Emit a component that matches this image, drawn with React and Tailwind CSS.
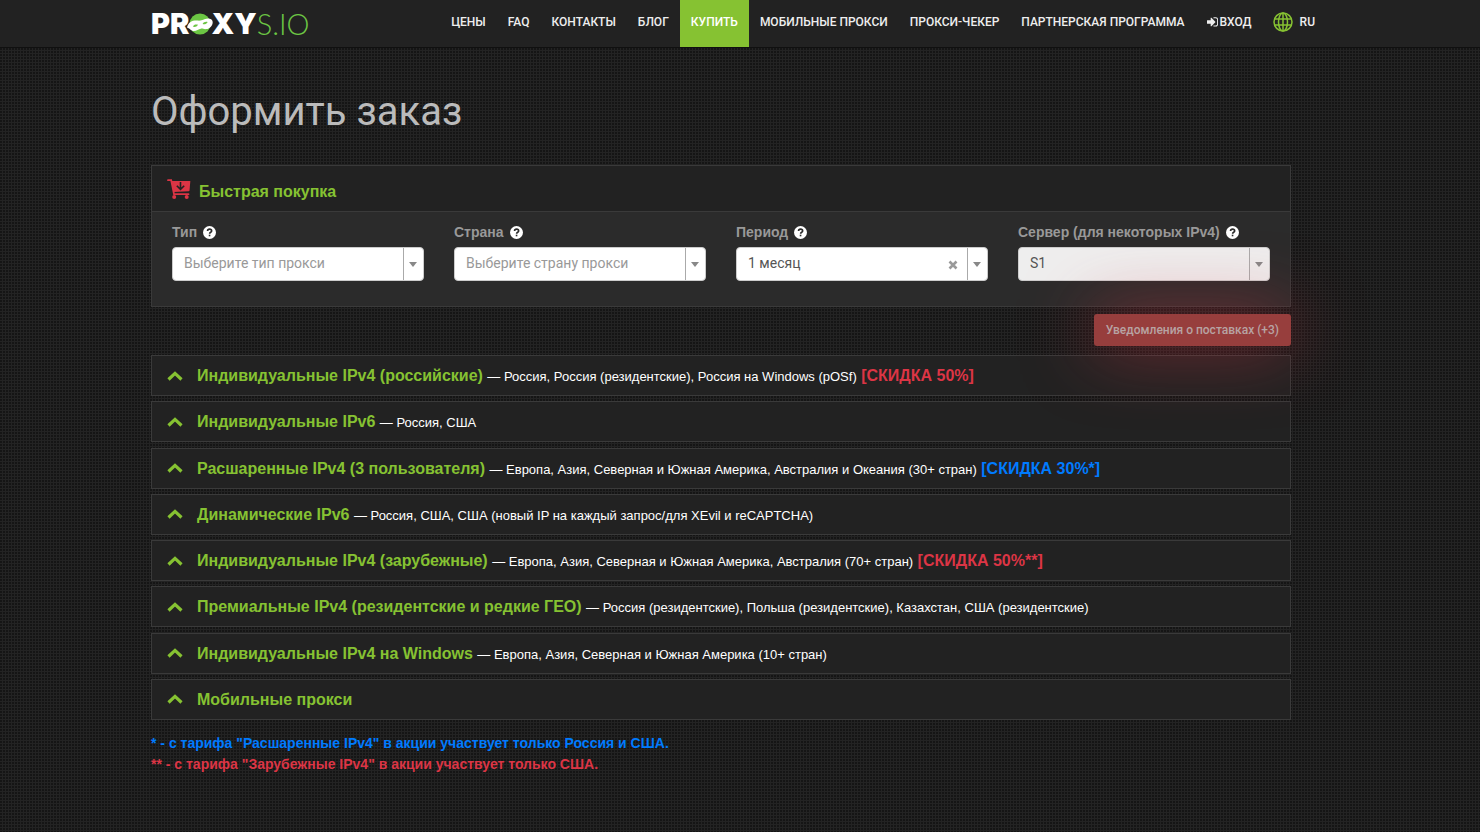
import React, { useState } from 'react';

const texture = 'bg-[#232323] bg-[conic-gradient(at_2px_2px,transparent_75%,rgba(0,0,0,0.4)_0)] bg-[length:3px_3px]';

const navLinks = [
  { title: 'ЦЕНЫ' },
  { title: 'FAQ' },
  { title: 'КОНТАКТЫ' },
  { title: 'БЛОГ' },
  { title: 'КУПИТЬ', active: true },
  { title: 'МОБИЛЬНЫЕ ПРОКСИ' },
  { title: 'ПРОКСИ-ЧЕКЕР' },
  { title: 'ПАРТНЕРСКАЯ ПРОГРАММА' },
  { title: 'ВХОД', icon: true },
];

const fields = [
  { id: 'type', label: 'Тип', value: 'Выберите тип прокси', placeholder: true },
  { id: 'country', label: 'Страна', value: 'Выберите страну прокси', placeholder: true },
  { id: 'period', label: 'Период', value: '1 месяц', clearable: true },
  { id: 'server', label: 'Сервер (для некоторых IPv4)', value: 'S1', disabled: true },
];

const tariffs = [
  {
    title: 'Индивидуальные IPv4 (российские)',
    text: 'Россия, Россия (резидентские), Россия на Windows (pOSf)',
    sale: '[СКИДКА 50%]',
    saleClass: 'text-[#dc3545]',
  },
  { title: 'Индивидуальные IPv6', text: 'Россия, США' },
  {
    title: 'Расшаренные IPv4 (3 пользователя)',
    text: 'Европа, Азия, Северная и Южная Америка, Австралия и Океания (30+ стран)',
    sale: '[СКИДКА 30%*]',
    saleClass: 'text-[#007bff]',
  },
  { title: 'Динамические IPv6', text: 'Россия, США, США (новый IP на каждый запрос/для XEvil и reCAPTCHA)' },
  {
    title: 'Индивидуальные IPv4 (зарубежные)',
    text: 'Европа, Азия, Северная и Южная Америка, Австралия (70+ стран)',
    sale: '[СКИДКА 50%**]',
    saleClass: 'text-[#dc3545]',
  },
  {
    title: 'Премиальные IPv4 (резидентские и редкие ГЕО)',
    text: 'Россия (резидентские), Польша (резидентские), Казахстан, США (резидентские)',
  },
  { title: 'Индивидуальные IPv4 на Windows', text: 'Европа, Азия, Северная и Южная Америка (10+ стран)' },
  { title: 'Мобильные прокси' },
];

function Logo() {
  return (
    <a href="#" aria-label="PROXYS.IO" className="flex items-center h-12 text-[29px] leading-7 text-white font-['Inter',sans-serif] font-black">
      <span>PR</span>
      <svg viewBox="0 0 26 22" className="w-[26px] h-[22px] -mx-0.5">
        <circle cx="13" cy="11" r="10.5" fill="#6cc644" />
        <path
          fill="#fff"
          fillRule="evenodd"
          d="M0 14.500C.8 11 3.500 8.200 7.500 7.600c2.500-.4 4 .4 6 0 3-.7 5.300-2.400 8.300-2.200 2.700.2 4 1.700 3.900 4-.2 3.500-3 6.300-6.500 6.700-2.400.3-3.600-.8-5.400-.4-2.300.5-4.100 2.300-7 2.300C4 18 3.200 15.600 0 14.500zm5.800-.9c1.700.8 4 .3 5.200-1.800-2-.7-4.200-.3-5.200 1.800zm9.800-2.700c1.700.7 4 .1 5.100-2-2-.6-4.300 0-5.100 2z"
        />
      </svg>
      <span>XY</span>
      <span className="font-['Lato',sans-serif] font-light text-[#6cc644]">S.IO</span>
    </a>
  );
}

function SignInIcon() {
  return (
    <svg viewBox="0 128 1536 1280" className="w-[11px] h-[10px] mr-0.5" fill="currentColor">
      <path d="M1184 768q0 26-19 45l-544 544q-19 19-45 19t-45-19-19-45v-288H64q-26 0-45-19T0 960V576q0-26 19-45t45-19h448V224q0-26 19-45t45-19 45 19l544 544q19 19 19 45zM1536 416v704q0 119-84.500 203.500T1248 1408H928q-13 0-22.500-9.500T896 1376v-96q0-32 32-32h320q66 0 113-47t47-113V416q0-66-47-113t-113-47H928q-32 0-32-32v-96q0-32 32-32h320q119 0 203.500 84.500T1536 416z" />
    </svg>
  );
}

function GlobeIcon() {
  return (
    <svg viewBox="0 0 20 20" className="w-5 h-5" fill="none" stroke="#86c232" strokeWidth="1.500">
      <circle cx="10" cy="10" r="9" />
      <ellipse cx="10" cy="10" rx="4.500" ry="9" />
      <path d="M10 1v18M1.600 7h16.800M1.600 13h16.800" />
    </svg>
  );
}

function CartIcon() {
  return (
    <svg viewBox="0 0 24 20" className="w-6 h-5" fill="none" stroke="#dc3545">
      <path fill="#dc3545" stroke="none" d="M4.300 2h18.500q.5 0 .5.600l-.8 8.900q-.1.600-.8.700L6.300 13z" />
      <path strokeWidth="1.800" strokeLinecap="round" d="M1 1.200h3.200L7 15.200h14.500" />
      <path stroke="#222222" strokeWidth="1.600" d="M13.500 3v7.500M9.800 6.700l3.700 3.700 3.700-3.700" />
      <circle cx="7.200" cy="18" r="2" fill="#dc3545" stroke="none" />
      <circle cx="19.700" cy="18" r="2" fill="#dc3545" stroke="none" />
    </svg>
  );
}

function HelpIcon() {
  return (
    <svg viewBox="0 0 12 12" className="w-[13px] h-[13px]" fill="none">
      <circle cx="6" cy="6" r="6" fill="#fff" />
      <path d="M4.200 4.700C4.200 3.500 5 2.900 6.100 2.900s1.900.6 1.900 1.600c0 1.200-1.900 1.300-1.900 2.600" stroke="#2b2b2b" strokeWidth="1.500" />
      <path d="M5.300 8h1.500v1.500H5.300z" fill="#2b2b2b" />
    </svg>
  );
}

function ChevronUp() {
  return (
    <svg viewBox="0 0 16 10" className="w-4 h-[10px] shrink-0" fill="none" stroke="#86c232" strokeWidth="3.200">
      <path d="M1.500 8.500L8 2.400l6.500 6.100" />
    </svg>
  );
}

function SelectField({ field }) {
  const [value, setValue] = useState(field.value);

  return (
    <div>
      <label
        htmlFor={field.id}
        className="flex items-center gap-1.5 h-5 mb-[5px] font-['Liberation_Sans',sans-serif] text-sm font-bold text-[#999999]"
      >
        {field.label}
        <HelpIcon />
      </label>
      <div className="relative">
        <select
          id={field.id}
          value={value}
          disabled={field.disabled}
          onChange={(e) => setValue(e.target.value)}
          className={`block w-full h-[34px] pl-[11px] pr-8 pb-0.5 appearance-none rounded-sm border border-[#cccccc] text-sm opacity-100 ${
            field.disabled ? 'bg-[#eeeeee]' : 'bg-white'
          } ${field.placeholder ? 'text-[#999999]' : 'text-[#555555]'}`}
        >
          <option>{field.value}</option>
        </select>
        {field.clearable && (
          <button type="button" aria-label="Очистить" className="absolute right-[30px] top-[13px]">
            <svg viewBox="0 0 10 10" className="w-[10px] h-[10px]" stroke="#999999" strokeWidth="2.600">
              <path d="M1.500 1.500l7 7M8.500 1.500l-7 7" />
            </svg>
          </button>
        )}
        <span className="absolute right-0 inset-y-px w-[21px] pr-0.5 border-l border-[#aaaaaa] flex items-center justify-center pointer-events-none">
          <svg viewBox="0 0 8 5" className="w-2 h-[5px]" fill="#888888">
            <path d="M0 0h8L4 5z" />
          </svg>
        </span>
      </div>
    </div>
  );
}

function App() {
  return (
    <div className={`min-h-screen font-['Roboto',sans-serif] text-sm text-white ${texture}`}>
      <header className="h-12 bg-[#222222] border-b border-[#101010] pr-[38px]">
        <div className="max-w-[1140px] mx-auto flex justify-between">
          <Logo />
          <nav className="flex shrink-0 -mr-6 text-xs font-medium whitespace-nowrap">
            {navLinks.map((link) => (
              <a
                key={link.title}
                href="#"
                className={`flex items-center h-[47px] px-[11px] pb-1 ${link.active ? 'bg-[#86c232] text-white' : 'text-[#eeeeee]'}`}
              >
                {link.icon && <SignInIcon />}
                {link.title}
              </a>
            ))}
            <a href="#" className="flex items-center gap-[7px] h-[47px] pl-[10px] pb-1 text-[#eeeeee]">
              <GlobeIcon />
              RU
            </a>
          </nav>
        </div>
      </header>

      <main className="pr-[38px]">
        <div className="max-w-[1140px] mx-auto pt-10">
          <h1 className="mb-[30px] text-[40px] leading-[47px] text-[#bbbbbb]">Оформить заказ</h1>

          <section className="border border-[#3a3a3a] bg-[#2b2b2b]">
            <div className="flex items-center gap-2 h-[46px] px-[15px] bg-[#222222] border-b border-[#3a3a3a]">
              <CartIcon />
              <h2 className="pt-1.5 font-['Liberation_Sans',sans-serif] text-base font-bold text-[#86c232]">Быстрая покупка</h2>
            </div>
            <form className="grid grid-cols-4 gap-[30px] px-5 pt-[10px] pb-[25px]">
              {fields.map((field) => (
                <SelectField key={field.id} field={field} />
              ))}
            </form>
          </section>

          <div className="flex justify-end mt-[7px] mb-[9px]">
            <button
              type="button"
              className="relative h-8 px-3 rounded-[3px] bg-[#973e3d] text-xs font-medium text-[#b7a3a3] shadow-[0_0_70px_rgba(220,53,69,0.6)]"
            >
              Уведомления о поставках (+3)
            </button>
          </div>

          <ul className="flex flex-col justify-between min-h-[365px] font-['Liberation_Sans',sans-serif]">
            {tariffs.map((tariff) => (
              <li key={tariff.title}>
                <button
                  type="button"
                  className="flex items-center w-full h-[41px] px-[15px] bg-[#222222] border border-[#3a3a3a] text-left"
                >
                  <ChevronUp />
                  <span className="ml-[14px] pt-0.5 text-base leading-5">
                    <b className="text-[#86c232]">{tariff.title}</b>
                    {tariff.text && <> <span className="text-[13px]">— {tariff.text}</span></>}
                    {tariff.sale && <b className={tariff.saleClass}> {tariff.sale}</b>}
                  </span>
                </button>
              </li>
            ))}
          </ul>

          <div className="mt-[13px] font-['Liberation_Sans',sans-serif] text-sm leading-[21px] font-bold">
            <p className="text-[#007bff]">* - с тарифа "Расшаренные IPv4" в акции участвует только Россия и США.</p>
            <p className="text-[#dc3545]">** - с тарифа "Зарубежные IPv4" в акции участвует только США.</p>
          </div>
        </div>
      </main>
    </div>
  );
}

export default App;
